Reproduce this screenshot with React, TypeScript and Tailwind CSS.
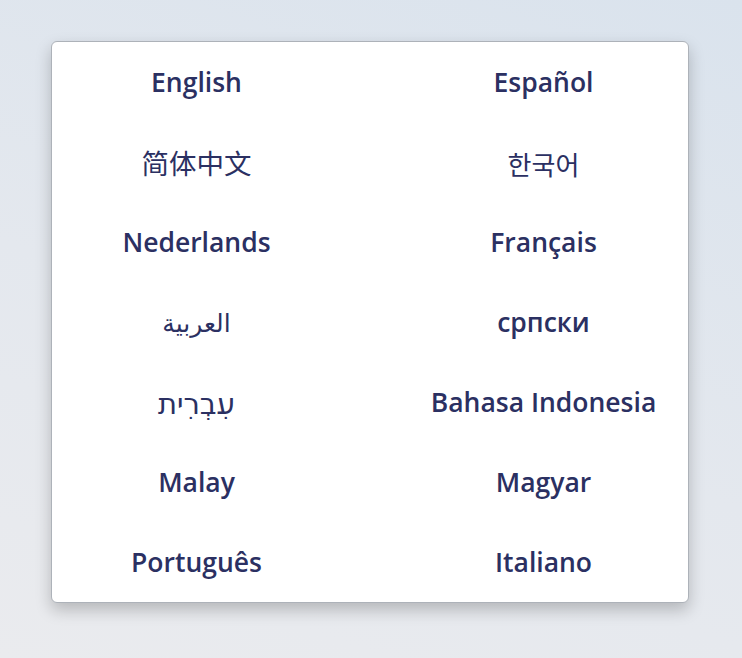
import React from "react";

const BOLD =
  "text-[26.5px] font-semibold text-[#2b3062] font-['Open_Sans','Noto_Sans',sans-serif]";
const ZH =
  "text-[27.5px] font-normal text-[#2b3062] font-['Noto_Sans_CJK_SC',sans-serif]";
const KO =
  "text-[26px] font-normal text-[#2b3062] font-['Noto_Sans_CJK_KR',sans-serif]";
const AR =
  "text-[25px] font-normal text-[#2b3062] font-['Noto_Sans','DejaVu_Sans',sans-serif]";
const HE =
  "text-[29px] font-normal text-[#2b3062] font-['Noto_Sans','DejaVu_Sans',sans-serif]";

const langs: [string, string][] = [
  ["English", BOLD],
  ["Español", BOLD],
  ["简体中文", ZH],
  ["한국어", KO],
  ["Nederlands", BOLD],
  ["Français", BOLD],
  ["العربية", AR],
  ["српски", BOLD],
  ["עִבְרִית", HE],
  ["Bahasa Indonesia", BOLD],
  ["Malay", BOLD],
  ["Magyar", BOLD],
  ["Português", BOLD],
  ["Italiano", BOLD],
];

export default function App() {
  return (
    <div className="w-[742px] h-[658px] bg-[linear-gradient(200deg,#dae3ed_0%,#e4e8ee_55%,#eaebee_100%)] pt-[41px] pl-[51px]">
      <div className="w-[638px] h-[562px] bg-white border border-[#adb2b9] rounded-[6px] shadow-[0_7px_16px_rgba(0,0,0,0.22)] grid grid-cols-[289px_289px] gap-x-[58px] grid-rows-7">
        {langs.map(([name, cls], i) => (
          <div key={i} className="flex items-center justify-center pt-[2px]">
            <span className={cls}>{name}</span>
          </div>
        ))}
      </div>
    </div>
  );
}
